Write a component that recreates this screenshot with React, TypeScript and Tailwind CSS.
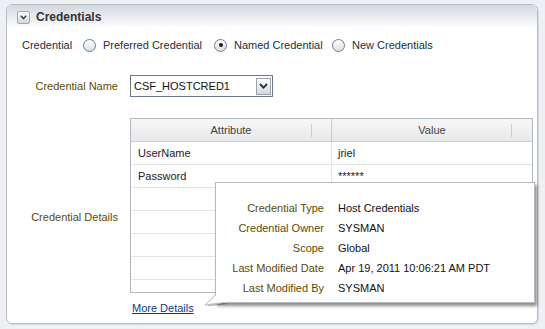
import React from "react";

const font = { fontFamily: '"Liberation Sans", Arial, sans-serif' };

function Radio({ checked }: { checked?: boolean }) {
  return (
    <span className="w-[13px] h-[13px] rounded-full border border-[#6f7b88] bg-gradient-to-b from-white to-[#d9e0e8] flex items-center justify-center shrink-0">
      {checked && <span className="w-[4px] h-[4px] rounded-full bg-[#1c1c1c]" />}
    </span>
  );
}

const rows = [
  ["UserName", "jriel"],
  ["Password", "******"],
  ["", ""],
  ["", ""],
  ["", ""],
  ["", ""],
  ["", ""],
];

const details = [
  ["Credential Type", "Host Credentials"],
  ["Credential Owner", "SYSMAN"],
  ["Scope", "Global"],
  ["Last Modified Date", "Apr 19, 2011 10:06:21 AM PDT"],
  ["Last Modified By", "SYSMAN"],
];

export default function App() {
  return (
    <div
      className="relative w-[545px] h-[329px] bg-[#eef0f3] pt-[4px] pl-[6px] pr-[7px] overflow-hidden text-[11px]"
      style={font}
    >
      <div className="h-[320px] border border-[#b8bdc5] rounded-[6px] bg-white shadow-[1px_1px_0_#d7dadf] overflow-hidden flex flex-col">
        {/* header */}
        <div className="h-[24px] shrink-0 bg-gradient-to-b from-[#d3d7de] to-white flex items-center pl-[10px] gap-[6px] rounded-t-[6px]">
          <span className="w-[13px] h-[13px] border border-[#a0a8b2] rounded-[2px] bg-gradient-to-b from-white to-[#d3d8de] flex items-center justify-center">
            <svg width="7" height="5" viewBox="0 0 7 5">
              <path d="M0.8 0.8 L3.5 3.6 L6.2 0.8" fill="none" stroke="#3a4450" strokeWidth="1.5" />
            </svg>
          </span>
          <span className="text-[12px] font-bold text-[#333]">Credentials</span>
        </div>

        {/* radio row */}
        <div className="mt-[6px] h-[20px] flex items-center pl-[15px] text-[#1b2f3a]">
          <span className="w-[61px]">Credential</span>
          <Radio />
          <span className="ml-[7px] w-[111px]">Preferred Credential</span>
          <Radio checked />
          <span className="ml-[7px] w-[98px]">Named Credential</span>
          <Radio />
          <span className="ml-[7px]">New Credentials</span>
        </div>

        {/* credential name */}
        <div className="mt-[20px] h-[22px] flex items-center">
          <span className="w-[111px] text-right text-[#5c4a06]">Credential Name</span>
          <div className="ml-[12px] w-[143px] h-[22px] border border-[#6b7784] bg-white flex items-center justify-between pl-[3px] pr-[1px]">
            <span className="text-[#111]">CSF_HOSTCRED1</span>
            <span className="w-[15px] h-[17px] border border-[#9aa3ad] bg-gradient-to-b from-white to-[#d4d9df] flex items-center justify-center">
              <svg width="9" height="6" viewBox="0 0 9 6">
                <path d="M1 1 L4.5 4.6 L8 1" fill="none" stroke="#2c3640" strokeWidth="2" />
              </svg>
            </span>
          </div>
        </div>

        {/* table */}
        <div className="mt-[21px] flex">
          <div className="w-[111px] pt-[23px] flex items-center justify-end text-[#5c4a06]">
            Credential Details
          </div>
          <div className="ml-[12px] w-[403px] h-[175px] border border-[#b3b8be] overflow-hidden flex flex-col">
            <div className="h-[23px] shrink-0 flex border-b border-[#c9cdd2] bg-gradient-to-b from-[#f7f7f7] to-[#e8e9eb] text-[#444]">
              <div className="w-[201px] relative flex items-center justify-center border-r border-[#c9cdd2]">
                Attribute
                <span className="absolute right-[19px] top-[5px] h-[13px] w-px bg-[#c9cdd2]" />
              </div>
              <div className="flex-1 relative flex items-center justify-center">
                Value
                <span className="absolute right-[20px] top-[5px] h-[13px] w-px bg-[#c9cdd2]" />
              </div>
            </div>
            {rows.map((r, i) => (
              <div key={i} className="h-[23px] shrink-0 flex border-b border-[#e4e4e4] text-[#222]">
                <div className="w-[201px] flex items-center pl-[7px] border-r border-[#e4e4e4]">{r[0]}</div>
                <div className="flex-1 flex items-center pl-[6px]">{r[1]}</div>
              </div>
            ))}
          </div>
        </div>

        {/* link */}
        <div className="mt-[7px] h-[16px] flex items-center pl-[125px]">
          <a className="text-[#0b3a96] underline">More Details</a>
        </div>
      </div>

      {/* popup */}
      <div className="absolute left-[215px] top-[182px] w-[320px] h-[121px] bg-white border border-[#b5b8bc] shadow-[2px_3px_3px_rgba(0,0,0,0.45)] pt-[15px]">
        {details.map((d, i) => (
          <div key={i} className="h-[20px] flex items-center">
            <span className="w-[108px] text-right text-[#5c4a06]">{d[0]}</span>
            <span className="ml-[14px] text-[#111]">{d[1]}</span>
          </div>
        ))}
      </div>
      <svg className="absolute left-[200px] top-[290px]" width="30" height="20" viewBox="0 0 30 20">
        <path d="M16 5 L6 15 L26 12.5" fill="rgba(0,0,0,0.25)" transform="translate(1.5,1.5)" />
        <path d="M16 3 L16 5 L5 15 L26 12.4 L26 3 Z" fill="white" />
        <path d="M16 4.5 L5 15 L24 12.5" fill="none" stroke="#b5b8bc" strokeWidth="1" />
      </svg>
    </div>
  );
}
